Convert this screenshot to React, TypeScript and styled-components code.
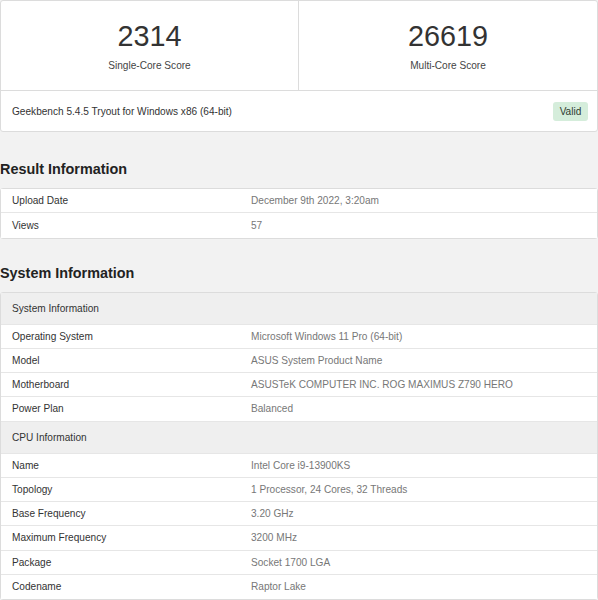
import styled, { createGlobalStyle } from 'styled-components';

const GlobalStyle = createGlobalStyle`
  html, body {
    margin: 0;
    padding: 0;
    background: #f2f2f2;
    font-family: "Liberation Sans", Arial, sans-serif;
  }
  * { box-sizing: border-box; }
`;

const Page = styled.div`
  width: 598px;
  height: 600px;
  overflow: hidden;
`;

const Card = styled.div`
  background: #ffffff;
  border: 1px solid #dcdcdc;
  border-radius: 3px;
  width: 598px;
`;

const ScoreRow = styled.div`
  display: grid;
  grid-template-columns: 298px 1fr;
  height: 89px;
`;

const ScoreCell = styled.div<{ divider?: boolean }>`
  display: flex;
  flex-direction: column;
  align-items: center;
  padding-top: 18px;
  border-right: ${({ divider }) => (divider ? '1px solid #dcdcdc' : 'none')};
`;

const ScoreValue = styled.div`
  font-size: 28.8px;
  line-height: 34px;
  color: #333;
`;

const ScoreLabel = styled.div`
  margin-top: 6px;
  font-size: 10.1px;
  line-height: 14px;
  color: #444;
`;

const VersionBar = styled.div`
  border-top: 1px solid #dcdcdc;
  height: 41px;
  display: flex;
  align-items: center;
  justify-content: space-between;
  padding: 0 9px 0 11px;
  font-size: 10.1px;
  color: #333;
`;

const Badge = styled.span`
  background: #d5eddb;
  color: #2e3b31;
  border-radius: 3px;
  width: 35px;
  height: 19px;
  display: flex;
  align-items: center;
  justify-content: center;
  font-size: 10.1px;
`;

const Heading = styled.h2<{ top: number }>`
  margin: ${({ top }) => top}px 0 10px 0;
  font-size: 14.4px;
  line-height: 18px;
  font-weight: bold;
  color: #222;
`;

const Row = styled.div<{ header?: boolean }>`
  display: grid;
  grid-template-columns: 239px 1fr;
  align-items: center;
  height: ${({ header }) => (header ? '32px' : '24.25px')};
  background: ${({ header }) => (header ? '#efefef' : '#ffffff')};
  border-bottom: 1px solid #e6e6e6;
  font-size: 10.1px;
  &:last-child { border-bottom: none; }
`;

const Label = styled.div`
  padding-left: 11px;
  color: #333;
`;

const Value = styled.div`
  padding-left: 11px;
  color: #777;
`;

type Item = { label: string; value?: string; header?: boolean };

const resultRows: Item[] = [
  { label: 'Upload Date', value: 'December 9th 2022, 3:20am' },
  { label: 'Views', value: '57' },
];

const systemRows: Item[] = [
  { label: 'System Information', header: true },
  { label: 'Operating System', value: 'Microsoft Windows 11 Pro (64-bit)' },
  { label: 'Model', value: 'ASUS System Product Name' },
  { label: 'Motherboard', value: 'ASUSTeK COMPUTER INC. ROG MAXIMUS Z790 HERO' },
  { label: 'Power Plan', value: 'Balanced' },
  { label: 'CPU Information', header: true },
  { label: 'Name', value: 'Intel Core i9-13900KS' },
  { label: 'Topology', value: '1 Processor, 24 Cores, 32 Threads' },
  { label: 'Base Frequency', value: '3.20 GHz' },
  { label: 'Maximum Frequency', value: '3200 MHz' },
  { label: 'Package', value: 'Socket 1700 LGA' },
  { label: 'Codename', value: 'Raptor Lake' },
];

const InfoTable = ({ rows }: { rows: Item[] }) => (
  <Card>
    {rows.map((r) => (
      <Row key={r.label} header={r.header}>
        <Label>{r.label}</Label>
        <Value>{r.value}</Value>
      </Row>
    ))}
  </Card>
);

export default function App() {
  return (
    <Page>
      <GlobalStyle />
      <Card>
        <ScoreRow>
          <ScoreCell divider>
            <ScoreValue>2314</ScoreValue>
            <ScoreLabel>Single-Core Score</ScoreLabel>
          </ScoreCell>
          <ScoreCell>
            <ScoreValue>26619</ScoreValue>
            <ScoreLabel>Multi-Core Score</ScoreLabel>
          </ScoreCell>
        </ScoreRow>
        <VersionBar>
          <span>Geekbench 5.4.5 Tryout for Windows x86 (64-bit)</span>
          <Badge>Valid</Badge>
        </VersionBar>
      </Card>
      <Heading top={28}>Result Information</Heading>
      <InfoTable rows={resultRows} />
      <Heading top={25}>System Information</Heading>
      <InfoTable rows={systemRows} />
    </Page>
  );
}
